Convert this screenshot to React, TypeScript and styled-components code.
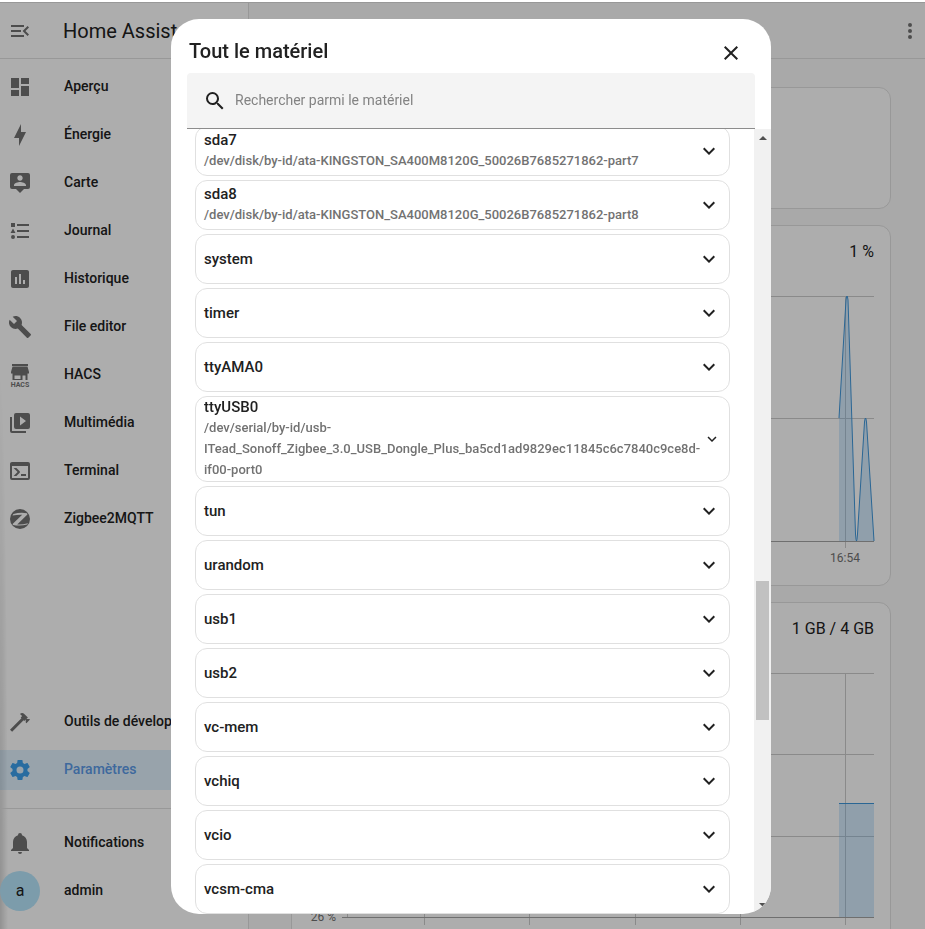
import React, { useLayoutEffect, useRef } from 'react';
import styled, { createGlobalStyle } from 'styled-components';

const GlobalStyle = createGlobalStyle`
  * { box-sizing: border-box; }
  body {
    margin: 0;
    background: #fff;
    color: #212121;
    font-family: Roboto, 'Noto Sans', sans-serif;
    font-size: 14px;
    overflow: hidden;
  }
  button, input { font: inherit; color: inherit; }
`;

const Page = styled.div`
  display: grid;
  grid-template-columns: 249px 1fr;
  height: 100vh;
  padding-top: 2px;
`;

const Sidebar = styled.nav`
  display: flex;
  flex-direction: column;
  min-height: 0;
  background: radial-gradient(ellipse 8px 60% at 0 100%, rgba(0, 0, 0, 0.16), rgba(0, 0, 0, 0)) #fff;
  border-top: 1px solid #e0e0e0;
  border-right: 1px solid #e0e0e0;
`;

const SidebarHeader = styled.div`
  display: flex;
  align-items: center;
  gap: 31px;
  flex: none;
  height: 56px;
  padding: 0 8px;
  border-bottom: 1px solid #e0e0e0;
  font-size: 20px;
  white-space: nowrap;
`;

const IconButton = styled.button<{ $muted?: boolean }>`
  display: flex;
  flex: none;
  padding: 0;
  border: 0;
  background: none;
  color: ${(p) => (p.$muted ? '#727272' : '#212121')};
  cursor: pointer;
`;

const NavList = styled.ul<{ $grow?: boolean }>`
  display: flex;
  flex-direction: column;
  gap: 8px;
  flex: ${(p) => (p.$grow ? '1' : 'none')};
  min-height: 0;
  margin: 0;
  padding: 8px 0 0;
  list-style: none;
`;

const FooterList = styled(NavList)`
  margin-top: 18px;
  padding: 14px 0 18px;
  border-top: 1px solid #e0e0e0;
`;

const NavLink = styled.a<{ $active?: boolean }>`
  display: flex;
  align-items: center;
  gap: 32px;
  height: 40px;
  padding: 0 8px;
  color: ${(p) => (p.$active ? '#5c9be8' : '#212121')};
  background: ${(p) => (p.$active ? 'rgba(66, 165, 245, 0.16)' : 'transparent')};
  font-weight: 500;
  line-height: 20px;
  text-decoration: none;
  white-space: nowrap;

  svg { color: ${(p) => (p.$active ? '#3ba0ec' : '#727272')}; }
  span { padding-bottom: 2px; }
`;

const UserLink = styled(NavLink)`
  gap: 24px;
  padding-left: 0;
`;

const Avatar = styled.b`
  display: grid;
  place-items: center;
  width: 40px;
  height: 40px;
  border-radius: 50%;
  background: #b7e6fc;
  font-weight: 400;
  font-size: 16px;
`;

const Main = styled.main`
  min-width: 0;
  overflow: hidden;
  background: #fafafa;
  border-top: 1px solid #e0e0e0;
`;

const Toolbar = styled.header`
  display: flex;
  align-items: center;
  justify-content: flex-end;
  height: 56px;
  padding: 0 3px;
  border-bottom: 1px solid #e0e0e0;
`;

const Cards = styled.div`
  display: flex;
  flex-direction: column;
  gap: 16px;
  padding: 28px 34px 16px 42px;
`;

const Card = styled.section`
  min-height: 122px;
  padding: 16px;
  border: 1px solid #e0e0e0;
  border-radius: 12px;
  background: #fff;
`;

const CardValue = styled.div`
  margin-bottom: 24px;
  font-size: 16px;
  line-height: 20px;
  text-align: right;
`;

const Chart = styled.svg`
  display: block;
  width: 100%;
  height: auto;
  overflow: visible;
  fill: none;
  font-size: 12px;

  .grid { stroke: #cccccc; }
  .axis { stroke: #a4a4a4; }
  .area { fill: #42a5f5; fill-opacity: 0.22; }
  .line { stroke: #3f97db; }
  text { fill: #727272; }
`;

const Scrim = styled.div`
  position: fixed;
  inset: 2px 0 0;
  display: flex;
  justify-content: center;
  padding: 17px 0 15px 17px;
  background: rgba(0, 0, 0, 0.32);
`;

const Dialog = styled.section`
  display: flex;
  flex-direction: column;
  width: 100%;
  max-width: 600px;
  border-radius: 28px;
  background: #fff;
  overflow: hidden;
`;

const DialogHeader = styled.header`
  display: flex;
  align-items: center;
  justify-content: space-between;
  height: 54px;
  padding: 14px 28px 0 18px;
`;

const DialogTitle = styled.h1`
  margin: 0;
  padding-bottom: 4px;
  font-size: 20px;
  font-weight: 500;
  line-height: 28px;
`;

const Search = styled.label`
  display: flex;
  align-items: center;
  gap: 8px;
  flex: none;
  height: 56px;
  margin: 0 16px;
  padding: 0 16px;
  border-bottom: 1px solid #8c8c8c;
  border-radius: 4px 4px 0 0;
  background: #f4f4f4;
`;

const SearchInput = styled.input`
  flex: 1;
  min-width: 0;
  padding: 0 0 2px;
  border: 0;
  outline: 0;
  background: none;
  &::placeholder { color: #838383; opacity: 1; }
`;

const DialogBody = styled.div`
  display: flex;
  flex: 1;
  min-height: 0;
`;

const DeviceList = styled.ul`
  display: flex;
  flex-direction: column;
  gap: 4px;
  flex: 1;
  min-width: 0;
  margin: 0;
  padding: 0 24px;
  list-style: none;
  overflow-y: auto;
  scrollbar-width: none;
`;

const DeviceItem = styled.li`
  flex: none;
`;

const DevicePanel = styled.button`
  display: flex;
  align-items: center;
  justify-content: space-between;
  width: 100%;
  min-height: 50px;
  padding: 0 8px;
  border: 1px solid #e0e0e0;
  border-radius: 12px;
  background: #fff;
  font-weight: 500;
  text-align: left;
  cursor: pointer;
`;

const DeviceText = styled.span`
  flex: 1;
  min-width: 0;
  font-size: 15px;
  line-height: 20px;
`;

const DevicePath = styled.span`
  display: block;
  padding-bottom: 1px;
  color: #727272;
  font-size: 13px;
  line-height: 21px;
`;

const ScrollTrack = styled.div`
  display: flex;
  flex-direction: column;
  align-items: center;
  flex: none;
  width: 17px;
  padding: 7px 2px 7px;
  background: #f1f1f1;
`;

const ThumbArea = styled.div`
  display: grid;
  grid-template-rows: 441fr 139fr 183fr;
  flex: 1;
  width: 100%;
`;

const Thumb = styled.div`
  grid-row: 2;
  background: #c1c1c1;
`;

const paths = {
  menu: 'M21,15.61L19.59,17L14.58,12L19.59,7L21,8.39L17.44,12L21,15.61M3,6H16V8H3V6M3,13V11H13V13H3M3,18V16H16V18H3Z',
  dashboard: 'M13,3V9H21V3M13,21H21V11H13M3,21H11V15H3M3,13H11V3H3V13Z',
  bolt: 'M11 15H6L13 1V9H18L11 23V15Z',
  account:
    'M20,2H4A2,2 0 0,0 2,4V16A2,2 0 0,0 4,18H8L12,22L16,18H20A2,2 0 0,0 22,16V4A2,2 0 0,0 20,2M12,4.3C13.5,4.3 14.7,5.5 14.7,7C14.7,8.5 13.5,9.7 12,9.7C10.5,9.7 9.3,8.5 9.3,7C9.3,5.5 10.5,4.3 12,4.3M18,15H6V14.1C6,12.1 10,11 12,11C14,11 18,12.1 18,14.1V15Z',
  list: 'M5,9.5L7.5,14H2.5L5,9.5M3,4H7V8H3V4M5,20A2,2 0 0,0 7,18A2,2 0 0,0 5,16A2,2 0 0,0 3,18A2,2 0 0,0 5,20M9,5V7H21V5H9M9,19H21V17H9V19M9,13H21V11H9V13Z',
  chart: 'M9 17H7V10H9V17M13 17H11V7H13V17M17 17H15V13H17V17M19 3H5C3.9 3 3 3.9 3 5V19C3 20.1 3.9 21 5 21H19C20.1 21 21 20.1 21 19V5C21 3.9 20.1 3 19 3Z',
  wrench:
    'M22.7,19L13.6,9.9C14.5,7.6 14,4.9 12.1,3C10.1,1 7.1,0.6 4.7,1.7L9,6L6,9L1.6,4.7C0.4,7.1 0.9,10.1 2.9,12.1C4.8,14 7.5,14.5 9.8,13.6L18.9,22.7C19.3,23.1 19.9,23.1 20.3,22.7L22.6,20.4C23.1,20 23.1,19.3 22.7,19Z',
  play: 'M4,6H2V20A2,2 0 0,0 4,22H18V20H4V6M20,2H8A2,2 0 0,0 6,4V16A2,2 0 0,0 8,18H20A2,2 0 0,0 22,16V4A2,2 0 0,0 20,2M12,14.5V5.5L18,10L12,14.5Z',
  console:
    'M20,19V7H4V19H20M20,3A2,2 0 0,1 22,5V19A2,2 0 0,1 20,21H4A2,2 0 0,1 2,19V5C2,3.89 2.9,3 4,3H20M13,17V15H18V17H13M9.58,13L5.57,9H8.4L11.7,12.3C12.09,12.69 12.09,13.33 11.7,13.72L8.42,17H5.59L9.58,13Z',
  zigbee:
    'M12 2A10 10 0 1 0 12 22A10 10 0 1 0 12 2M5.4 6.9Q12 5.2 19 6.2L19.4 7.4L9.2 17.4Q14.400 17.600 20 16.200L19.2 17.600Q12 19.400 5 18L4.600 17L14.2 7.700Q9 7.600 4.500 8.600Z',
  hammer:
    'M2,19.63L13.43,8.2L12.72,7.5L14.14,6.07L12,3.89C13.2,2.7 15.09,2.7 16.27,3.89L19.87,7.5L18.45,8.91H21.29L22,9.62L18.45,13.21L17.74,12.5V9.62L16.27,11.04L15.56,10.33L4.13,21.76L2,19.63Z',
  cog: 'M12,15.5A3.5,3.5 0 0,1 8.5,12A3.5,3.5 0 0,1 12,8.5A3.5,3.5 0 0,1 15.5,12A3.5,3.5 0 0,1 12,15.5M19.43,12.97C19.47,12.65 19.5,12.33 19.5,12C19.5,11.67 19.47,11.34 19.43,11L21.54,9.37C21.73,9.22 21.78,8.95 21.66,8.73L19.66,5.27C19.54,5.05 19.27,4.96 19.05,5.05L16.56,6.05C16.04,5.66 15.5,5.32 14.87,5.07L14.5,2.42C14.46,2.18 14.25,2 14,2H10C9.75,2 9.54,2.18 9.5,2.42L9.13,5.07C8.5,5.32 7.96,5.66 7.44,6.05L4.95,5.05C4.73,4.96 4.46,5.05 4.34,5.27L2.34,8.73C2.21,8.95 2.27,9.22 2.46,9.37L4.57,11C4.53,11.34 4.5,11.67 4.5,12C4.5,12.33 4.53,12.65 4.57,12.97L2.46,14.63C2.27,14.78 2.21,15.05 2.34,15.27L4.34,18.73C4.46,18.95 4.73,19.03 4.95,18.95L7.44,17.94C7.96,18.34 8.5,18.68 9.13,18.93L9.5,21.58C9.54,21.82 9.75,22 10,22H14C14.25,22 14.46,21.82 14.5,21.58L14.87,18.93C15.5,18.67 16.04,18.34 16.56,17.94L19.05,18.95C19.27,19.03 19.54,18.95 19.66,18.73L21.66,15.27C21.78,15.05 21.73,14.78 21.54,14.63L19.43,12.97Z',
  bell: 'M21,19V20H3V19L5,17V11C5,7.9 7.03,5.17 10,4.29C10,4.19 10,4.1 10,4A2,2 0 0,1 12,2A2,2 0 0,1 14,4C14,4.1 14,4.19 14,4.29C16.97,5.17 19,7.9 19,11V17L21,19M14,21A2,2 0 0,1 12,23A2,2 0 0,1 10,21',
  dots: 'M12,16A2,2 0 0,1 14,18A2,2 0 0,1 12,20A2,2 0 0,1 10,18A2,2 0 0,1 12,16M12,10A2,2 0 0,1 14,12A2,2 0 0,1 12,14A2,2 0 0,1 10,12A2,2 0 0,1 12,10M12,4A2,2 0 0,1 14,6A2,2 0 0,1 12,8A2,2 0 0,1 10,6A2,2 0 0,1 12,4Z',
  search:
    'M9.5,3A6.5,6.5 0 0,1 16,9.5C16,11.11 15.41,12.59 14.44,13.73L14.71,14H15.5L20.5,19L19,20.5L14,15.5V14.71L13.73,14.44C12.59,15.41 11.11,16 9.5,16A6.5,6.5 0 0,1 3,9.5A6.5,6.5 0 0,1 9.5,3M9.5,5C7,5 5,7 5,9.5C5,12 7,14 9.5,14C12,14 14,12 14,9.5C14,7 12,5 9.5,5Z',
  close: 'M19,6.41L17.59,5L12,10.59L6.41,5L5,6.41L10.59,12L5,17.59L6.41,19L12,13.41L17.59,19L19,17.59L13.41,12L19,6.41Z',
  chevron: 'M7.41,8.58L12,13.17L16.59,8.58L18,10L12,16L6,10L7.41,8.58Z',
};

type IconName = keyof typeof paths;

const Icon = ({ name, size = 24 }: { name: IconName; size?: number }) => (
  <svg width={size} height={size} viewBox="0 0 24 24" fill="currentColor" fillRule="evenodd" aria-hidden="true">
    <path d={paths[name]} />
  </svg>
);

const HacsIcon = () => (
  <svg width="24" height="24" viewBox="0 0 24 24" fill="currentColor" fillRule="evenodd" aria-hidden="true">
    <path d="M4 1H20V3H4ZM4.500 3.500H19.500L21 9V10.500H3V9ZM4.500 10.500H19.500V17H17.500V12.500H14.500V17H4.500ZM6.500 12.500V16H12.500V12.500Z" />
    <text x="12" y="24" textAnchor="middle" fontSize="7" fontWeight="700">HACS</text>
  </svg>
);

const mainLinks: { label: string; icon: IconName | 'hacs' }[] = [
  { label: 'Aperçu', icon: 'dashboard' },
  { label: 'Énergie', icon: 'bolt' },
  { label: 'Carte', icon: 'account' },
  { label: 'Journal', icon: 'list' },
  { label: 'Historique', icon: 'chart' },
  { label: 'File editor', icon: 'wrench' },
  { label: 'HACS', icon: 'hacs' },
  { label: 'Multimédia', icon: 'play' },
  { label: 'Terminal', icon: 'console' },
  { label: 'Zigbee2MQTT', icon: 'zigbee' },
];

const devices: { name: string; path?: string }[] = [
  { name: 'sda7', path: '/dev/disk/by-id/ata-KINGSTON_SA400M8120G_50026B7685271862-part7' },
  { name: 'sda8', path: '/dev/disk/by-id/ata-KINGSTON_SA400M8120G_50026B7685271862-part8' },
  { name: 'system' },
  { name: 'timer' },
  { name: 'ttyAMA0' },
  {
    name: 'ttyUSB0',
    path: '/dev/serial/by-id/usb-ITead_Sonoff_Zigbee_3.0_USB_Dongle_Plus_ba5cd1ad9829ec11845c6c7840c9ce8d-if00-port0',
  },
  { name: 'tun' },
  { name: 'urandom' },
  { name: 'usb1' },
  { name: 'usb2' },
  { name: 'vc-mem' },
  { name: 'vchiq' },
  { name: 'vcio' },
  { name: 'vcsm-cma' },
];

const cpuCurve = 'M531 132L538 14Q539 6 540 14L547.500 248Q548.500 262 549.500 248L556.500 136Q557.500 128 558.500 136L566 255';

const CpuChart = () => (
  <Chart viewBox="0 0 566 283" role="img" aria-label="Processeur">
    <path className="grid" d="M34 10.500H566M34 132.500H566M537.500 10V262" />
    <path className="axis" d="M34 255.500H566" />
    <path className="area" d={`${cpuCurve}H531Z`} />
    <path className="line" d={cpuCurve} />
    <text x="537" y="276" textAnchor="middle">16:54</text>
  </Chart>
);

const MemoryChart = () => (
  <Chart viewBox="0 0 566 283" role="img" aria-label="Mémoire">
    <path className="grid" d="M34 10.500H566M34 91.500H566M34 173.500H566M39.500 10V255M116.500 10V262M221.500 10V262M327.500 10V262M432.500 10V262M537.500 10V262" />
    <path className="axis" d="M34 254.500H566" />
    <path className="area" d="M531 140H566V254H531Z" />
    <path className="line" d="M531 140.500H566" />
    <text x="28" y="258" textAnchor="end">26 %</text>
  </Chart>
);

export default function App() {
  const listRef = useRef<HTMLUListElement>(null);

  useLayoutEffect(() => {
    if (listRef.current) listRef.current.scrollTop = 3;
  }, []);

  return (
    <>
      <GlobalStyle />
      <Page>
        <Sidebar>
          <SidebarHeader>
            <IconButton $muted aria-label="Réduire le menu"><Icon name="menu" /></IconButton>
            Home Assistant
          </SidebarHeader>
          <NavList $grow>
            {mainLinks.map((link) => (
              <li key={link.label}>
                <NavLink href="#">
                  {link.icon === 'hacs' ? <HacsIcon /> : <Icon name={link.icon} />}
                  <span>{link.label}</span>
                </NavLink>
              </li>
            ))}
          </NavList>
          <NavList>
            <li><NavLink href="#"><Icon name="hammer" /><span>Outils de développement</span></NavLink></li>
            <li><NavLink href="#" $active><Icon name="cog" /><span>Paramètres</span></NavLink></li>
          </NavList>
          <FooterList>
            <li><NavLink href="#"><Icon name="bell" /><span>Notifications</span></NavLink></li>
            <li><UserLink href="#"><Avatar>a</Avatar><span>admin</span></UserLink></li>
          </FooterList>
        </Sidebar>
        <Main>
          <Toolbar>
            <IconButton $muted aria-label="Plus d'options"><Icon name="dots" /></IconButton>
          </Toolbar>
          <Cards>
            <Card />
            <Card><CardValue>1 %</CardValue><CpuChart /></Card>
            <Card><CardValue>1 GB / 4 GB</CardValue><MemoryChart /></Card>
          </Cards>
        </Main>
      </Page>
      <Scrim>
        <Dialog role="dialog" aria-modal="true" aria-labelledby="hardware-title">
          <DialogHeader>
            <DialogTitle id="hardware-title">Tout le matériel</DialogTitle>
            <IconButton aria-label="Fermer"><Icon name="close" /></IconButton>
          </DialogHeader>
          <Search>
            <Icon name="search" />
            <SearchInput type="text" aria-label="Rechercher parmi le matériel" placeholder="Rechercher parmi le matériel" />
          </Search>
          <DialogBody>
            <DeviceList ref={listRef}>
              {devices.map((device) => (
                <DeviceItem key={device.name}>
                  <DevicePanel aria-expanded="false">
                    <DeviceText>
                      {device.name}
                      {device.path && <DevicePath>{device.path}</DevicePath>}
                    </DeviceText>
                    <Icon name="chevron" size={device.name === 'ttyUSB0' ? 18 : 24} />
                  </DevicePanel>
                </DeviceItem>
              ))}
            </DeviceList>
            <ScrollTrack aria-hidden="true">
              <svg width="8" height="4" viewBox="0 0 8 4" fill="#505050"><path d="M0 4L4 0L8 4Z" /></svg>
              <ThumbArea><Thumb /></ThumbArea>
              <svg width="8" height="4" viewBox="0 0 8 4" fill="#505050"><path d="M0 0H8L4 4Z" /></svg>
            </ScrollTrack>
          </DialogBody>
        </Dialog>
      </Scrim>
    </>
  );
}
